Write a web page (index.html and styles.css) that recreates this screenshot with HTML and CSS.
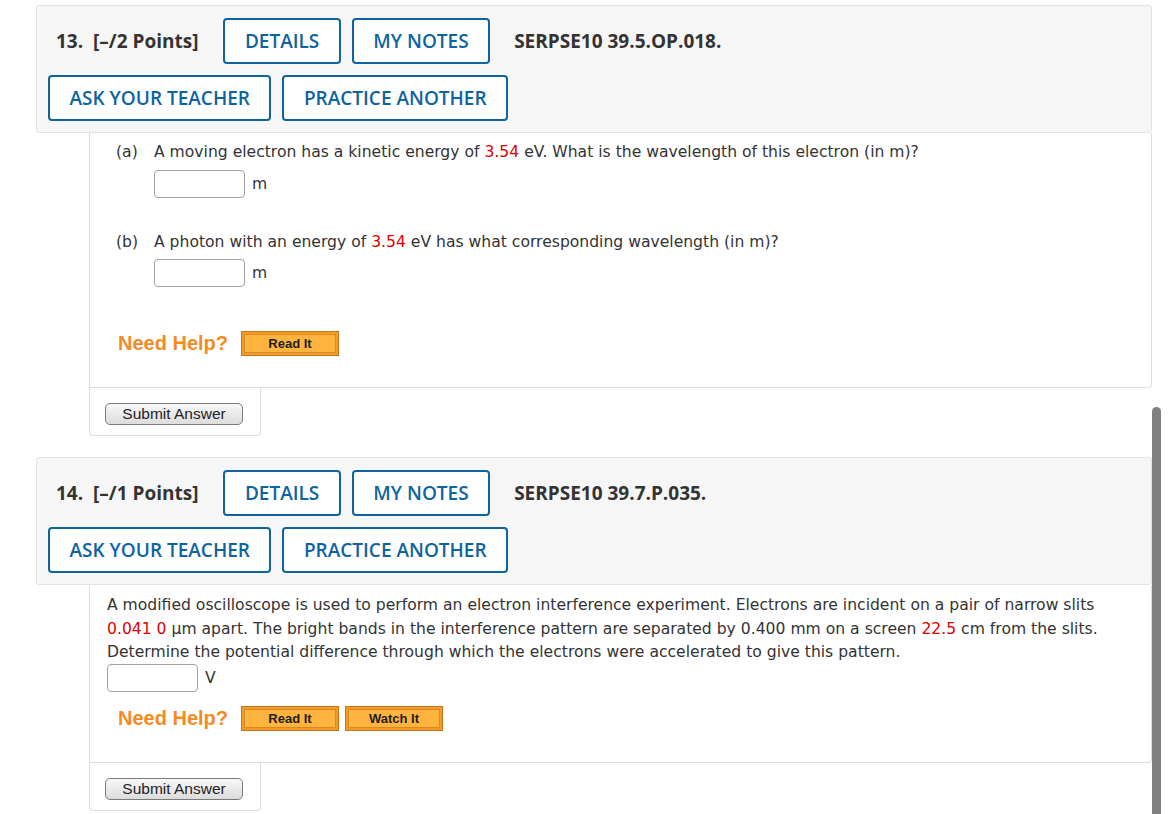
FILE: index.html
```html
<!DOCTYPE html>
<html lang="en">
<head>
  <meta charset="UTF-8" />
  <title>Questions</title>
  <link rel="stylesheet" href="styles.css">
</head>
<body>
  <div class="page">

    <div class="question">
      <div class="q-head">
        <div class="head-row">
          <span class="q-title">13.&nbsp; [–/2 Points]</span>
          <button class="btn">DETAILS</button>
          <button class="btn">MY NOTES</button>
          <span class="q-code">SERPSE10 39.5.OP.018.</span>
        </div>
        <div class="head-row">
          <button class="btn">ASK YOUR TEACHER</button>
          <button class="btn">PRACTICE ANOTHER</button>
        </div>
      </div>
      <div class="q-body">
        <div class="part">
          <span class="part-label">(a)</span>
          <div class="part-main">
            <p>A moving electron has a kinetic energy of <span class="red">3.54</span> eV. What is the wavelength of this electron (in m)?</p>
            <div class="answer"><input type="text"><span>m</span></div>
          </div>
        </div>
        <div class="part">
          <span class="part-label">(b)</span>
          <div class="part-main">
            <p>A photon with an energy of <span class="red">3.54</span> eV has what corresponding wavelength (in m)?</p>
            <div class="answer"><input type="text"><span>m</span></div>
          </div>
        </div>
        <div class="help">
          <span class="help-label">Need Help?</span>
          <button class="help-btn">Read It</button>
        </div>
      </div>
      <div class="q-submit">
        <button class="submit">Submit Answer</button>
      </div>
    </div>

    <div class="question">
      <div class="q-head">
        <div class="head-row">
          <span class="q-title">14.&nbsp; [–/1 Points]</span>
          <button class="btn">DETAILS</button>
          <button class="btn">MY NOTES</button>
          <span class="q-code">SERPSE10 39.7.P.035.</span>
        </div>
        <div class="head-row">
          <button class="btn">ASK YOUR TEACHER</button>
          <button class="btn">PRACTICE ANOTHER</button>
        </div>
      </div>
      <div class="q-body plain">
        <p>A modified oscilloscope is used to perform an electron interference experiment. Electrons are incident on a pair of narrow slits <span class="red">0.041 0</span> μm apart. The bright bands in the interference pattern are separated by 0.400 mm on a screen <span class="red">22.5</span> cm from the slits. Determine the potential difference through which the electrons were accelerated to give this pattern.</p>
        <div class="answer"><input type="text"><span>V</span></div>
        <div class="help">
          <span class="help-label">Need Help?</span>
          <button class="help-btn">Read It</button>
          <button class="help-btn">Watch It</button>
        </div>
      </div>
      <div class="q-submit">
        <button class="submit">Submit Answer</button>
      </div>
    </div>

  </div>

  <div class="scrollbar"></div>
</body>
</html>
```

FILE: styles.css
```css
* {
  box-sizing: border-box;
}

body {
  margin: 0;
  background: #fff;
  color: #333;
  font-family: "DejaVu Sans", Verdana, sans-serif;
}

.page {
  width: 1152px;
  padding: 5px 0 0 36px;
}

.question {
  margin-bottom: 21px;
}

/* header */
.q-head {
  background: #f6f6f6;
  border: 1px solid #e3e3e3;
  border-radius: 3px;
  padding: 12px 11px 11px;
  display: flex;
  flex-direction: column;
  gap: 11px;
  font-family: "Open Sans", sans-serif;
}

.head-row {
  display: flex;
  align-items: center;
  gap: 11px;
}

.q-title {
  font-weight: 700;
  font-size: 19px;
  color: #333;
  margin: 0 14px 0 8px;
}

.q-code {
  font-weight: 700;
  font-size: 19px;
  color: #333;
  margin-left: 13px;
}

.btn {
  height: 46px;
  padding: 0 19.5px;
  background: #fff;
  border: 2px solid #0e649e;
  border-radius: 4px;
  color: #0e649e;
  font-family: "Open Sans", sans-serif;
  font-weight: 600;
  font-size: 19px;
}

/* body */
.q-body {
  margin-left: 53px;
  background: #fff;
  border: 1px solid #ddd;
  border-top: none;
  border-radius: 0 0 4px 0;
  padding: 8px 17px 31px 26px;
  font-size: 15.6px;
}

.q-body.plain {
  padding: 9px 17px 31px 17px;
}

.q-body p {
  margin: 0;
  line-height: 23.5px;
}

.red {
  color: #e20000;
}

.part {
  display: flex;
  margin-bottom: 33px;
}

.part-label {
  width: 38px;
  line-height: 23.5px;
}

.part-main {
  flex: 1;
}

.answer {
  display: flex;
  align-items: center;
  gap: 7px;
  margin-top: 5px;
}

.q-body.plain .answer {
  margin-top: -1px;
}

.answer input {
  width: 91px;
  height: 28px;
  border: 1px solid #a0a0a0;
  border-radius: 4px;
  background: #fff;
}

.help {
  display: flex;
  align-items: center;
  gap: 6px;
  margin: 44px 0 0 2px;
}

.q-body.plain .help {
  margin: 14px 0 0 11px;
}

.help-label {
  font-family: "Liberation Sans", Arial, sans-serif;
  font-weight: 700;
  font-size: 20px;
  color: #f58a1f;
  margin-right: 7px;
}

.help-btn {
  width: 98px;
  height: 25px;
  padding: 0;
  background: #ffb43f;
  border: 1px solid #c47718;
  box-shadow: inset 0 0 0 2px #f49a2a, inset 0 0 0 3px #d8891f;
  font-family: "Liberation Sans", Arial, sans-serif;
  font-weight: 700;
  font-size: 13px;
  color: #1e1e1e;
}

/* submit */
.q-submit {
  margin-left: 53px;
  width: 172px;
  border: 1px solid #ddd;
  border-top: none;
  border-radius: 0 0 4px 4px;
  padding: 15px 17px 10px 15px;
}

.submit {
  display: block;
  width: 138px;
  height: 22px;
  padding: 0;
  border: 1px solid #7a7a7a;
  border-radius: 5px;
  background: linear-gradient(#f8f8f8, #dcdcdc);
  font-family: "Liberation Sans", Arial, sans-serif;
  font-size: 15.5px;
  color: #222;
}

.scrollbar {
  position: fixed;
  left: 1152px;
  top: 407px;
  bottom: 0;
  width: 9px;
  background: #808080;
  border-radius: 5px 5px 0 0;
}
```
